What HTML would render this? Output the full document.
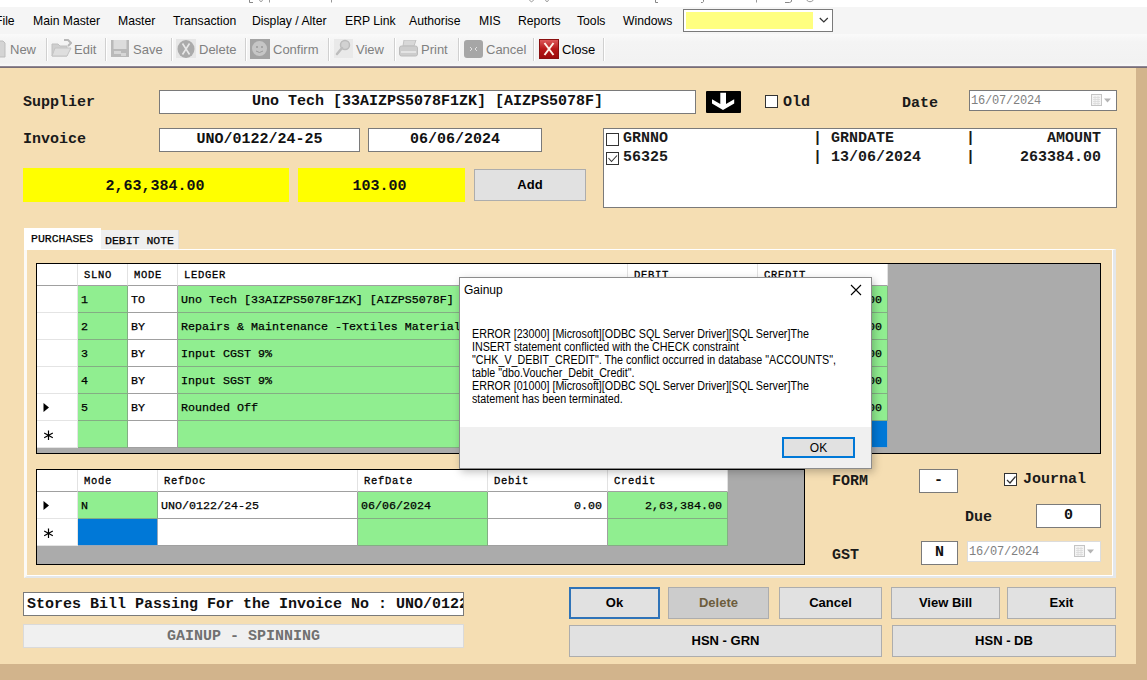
<!DOCTYPE html>
<html><head><meta charset="utf-8">
<style>
*{margin:0;padding:0;box-sizing:border-box}
html,body{width:1147px;height:680px;overflow:hidden;background:#d2b48c;position:relative}
body{font-family:"Liberation Sans",sans-serif}
.a{position:absolute}
.mono{font-family:"Liberation Mono",monospace;font-weight:bold}
#top{left:0;top:0;width:1147px;height:7px;background:#fff}
#menu{left:0;top:7px;width:1147px;height:27px;background:#f5f5f5}
.mi{position:absolute;top:7px;font-size:12.2px;color:#000;white-space:nowrap}
#combo{left:683px;top:9px;width:150px;height:23px;border:1px solid #7a7a7a;background:#fff}
#combo .y{position:absolute;left:2px;top:2px;width:127px;height:17px;background:#ffff80}
#tool{left:0;top:34px;width:1147px;height:32px;background:linear-gradient(#fafafa,#f4f4f4 25%,#f2f2f2 90%,#f9f9f9)}
#tline{left:0;top:66px;width:1147px;height:2px;background:linear-gradient(#9a92a2,#6c6268)}
.ti{position:absolute;top:8px;font-size:13px;color:#808080;white-space:nowrap}
.sep{position:absolute;top:4px;width:1px;height:23px;background:#d0d0d0;box-shadow:1px 0 0 #fff}
.ico{position:absolute;top:6px;width:20px;height:20px}
#form{left:0;top:68px;width:1136px;height:596px;background:#f5deb3}
.lbl{position:absolute;font-family:"Liberation Mono",monospace;font-weight:bold;font-size:15px;color:#1a1a1a;white-space:nowrap}
.box{position:absolute;background:#fff;border:1px solid #7a7a7a;font-family:"Liberation Mono",monospace;font-weight:bold;font-size:15px;color:#111;white-space:nowrap;overflow:hidden}
.btn{position:absolute;background:#e1e1e1;border:1px solid #adadad;font-family:"Liberation Sans",sans-serif;font-weight:bold;font-size:13px;color:#000;text-align:center}
.grid{position:absolute;background:#ababab;border:1px solid #000}
.c{position:absolute;border-right:1px solid #a0a0a0;border-bottom:1px solid #a0a0a0;font-family:"Liberation Mono",monospace;font-size:13px;color:#000;white-space:nowrap;overflow:hidden}
.g{background:#90ee90}
.w{background:#fff}
.hd{background:#fff;font-size:11px}
.t{position:absolute;white-space:nowrap}
.c .t{font-weight:normal;font-size:11.67px;-webkit-text-stroke:0.25px #000}
.hd .t{font-size:10.5px;letter-spacing:0.7px;font-weight:normal;-webkit-text-stroke:0.3px #000}
.sel{background:#0078d7}
</style></head><body>
<div id="top" class="a"></div>
<svg class="a" style="left:0;top:0" width="1147" height="7"><path d="M249.5 0 V2.5 H253" stroke="#888" stroke-width="1" fill="none"/><path d="M259.5 0 Q261.0 3.5 262.5 0" stroke="#999" stroke-width="1" fill="none"/><path d="M269.5 0 V2.5" stroke="#999" stroke-width="1"/><path d="M331.5 0 V2.5" stroke="#999" stroke-width="1"/><path d="M529.5 0 Q531.5 3.5 533.5 0" stroke="#999" stroke-width="1" fill="none"/><path d="M545.5 0 Q547.0 3.5 548.5 0" stroke="#999" stroke-width="1" fill="none"/><path d="M655.5 0 V2.5 H658" stroke="#888" stroke-width="1" fill="none"/><path d="M703.5 0 V1.5 Q703 3 701 2.5" stroke="#888" stroke-width="1" fill="none"/><path d="M756.5 0 V2.5" stroke="#999" stroke-width="1"/><path d="M791.5 0 V1.5 Q791 3 785 2.5" stroke="#888" stroke-width="1" fill="none"/><path d="M806.5 0 Q810.0 3.5 813.5 0" stroke="#999" stroke-width="1" fill="none"/></svg>
<div id="menu" class="a">
  <span class="mi" style="left:-5px">File</span>
  <span class="mi" style="left:33px">Main Master</span>
  <span class="mi" style="left:118px">Master</span>
  <span class="mi" style="left:173px">Transaction</span>
  <span class="mi" style="left:252px">Display / Alter</span>
  <span class="mi" style="left:345px">ERP Link</span>
  <span class="mi" style="left:409px">Authorise</span>
  <span class="mi" style="left:479px">MIS</span>
  <span class="mi" style="left:518px">Reports</span>
  <span class="mi" style="left:577px">Tools</span>
  <span class="mi" style="left:623px">Windows</span>
</div>
<div id="combo" class="a"><div class="y"></div>
  <svg class="a" style="left:135px;top:7px" width="10" height="7"><path d="M0.8 1 L4.8 5 L8.8 1" stroke="#333" stroke-width="1.2" fill="none"/></svg>
</div>
<div id="tool" class="a">
  <span class="ti" style="left:10px">New</span>
  <div class="sep" style="left:46px"></div>
  <span class="ti" style="left:74px">Edit</span>
  <div class="sep" style="left:105px"></div>
  <span class="ti" style="left:133px">Save</span>
  <div class="sep" style="left:171px"></div>
  <span class="ti" style="left:199px">Delete</span>
  <div class="sep" style="left:245px"></div>
  <span class="ti" style="left:273px">Confirm</span>
  <div class="sep" style="left:328px"></div>
  <span class="ti" style="left:356px">View</span>
  <div class="sep" style="left:394px"></div>
  <span class="ti" style="left:421px">Print</span>
  <div class="sep" style="left:458px"></div>
  <span class="ti" style="left:486px">Cancel</span>
  <div class="sep" style="left:533px"></div>
  <span class="ti" style="left:562px;color:#000">Close</span>
  <div class="sep" style="left:603px"></div>
</div>

<svg class="a" style="left:0;top:39px" width="6" height="20"><path d="M-8 2 H3 L5 4 V18 H-8 Z" fill="#d4d4d4" stroke="#bdbdbd"/></svg>
<svg class="a" style="left:51px;top:39px" width="21" height="19"><path d="M1 5 H7 L9 7 H16 V17 H1 Z" fill="#cfcfcf" stroke="#c0c0c0"/><path d="M1 17 L4 9 H20 L16 17 Z" fill="#dedede" stroke="#c4c4c4"/><path d="M13 1 L17 1 L20 4 L17 7" fill="none" stroke="#b8b8b8" stroke-width="2"/></svg>
<svg class="a" style="left:111px;top:40px" width="18" height="18"><rect x="0" y="0" width="18" height="17" fill="#b9b9b9"/><rect x="2.5" y="0" width="13" height="9" fill="#dcdcdc"/><rect x="3" y="11" width="7" height="3" fill="#d6d6d6"/><rect x="10" y="13" width="5" height="3" fill="#d6d6d6"/></svg>
<svg class="a" style="left:176px;top:39px" width="20" height="20"><rect x="0" y="0" width="20" height="19" fill="#e6e6e6"/><ellipse cx="10" cy="10" rx="8.5" ry="9" fill="#ababab"/><path d="M6.5 4.5 L13.5 15.5 M13.5 4.5 L6.5 15.5" stroke="#e8e8e8" stroke-width="1.6"/></svg>
<svg class="a" style="left:250px;top:39px" width="20" height="20"><rect x="0" y="0" width="20" height="20" fill="#a3a3a3"/><circle cx="9.5" cy="9.5" r="7.5" fill="#c6c6c6"/><circle cx="7" cy="8" r="1" fill="#9a9a9a"/><circle cx="12" cy="8" r="1" fill="#9a9a9a"/><path d="M6 12 Q9.5 15 13 12" stroke="#9a9a9a" fill="none"/></svg>
<svg class="a" style="left:334px;top:39px" width="19" height="19"><rect x="0" y="0" width="19" height="19" fill="#e9e9e9"/><circle cx="11" cy="6" r="4.5" fill="#d2d2d2" stroke="#bcbcbc" stroke-width="1.5"/><path d="M8 9 L3 15" stroke="#bdbdbd" stroke-width="2.5" stroke-linecap="round"/></svg>
<svg class="a" style="left:399px;top:40px" width="19" height="18"><path d="M5 0 H17 L15 6 H4 Z" fill="#d8d8d8" stroke="#c2c2c2"/><rect x="0.5" y="6" width="18" height="10" rx="2" fill="#cdcdcd" stroke="#bcbcbc"/><rect x="2" y="11" width="15" height="2" fill="#e4e4e4"/></svg>
<svg class="a" style="left:464px;top:40px" width="19" height="18"><rect x="0" y="0" width="19" height="18" rx="3" fill="#a6a6a6"/><path d="M6 7 L8 9 L6 11 M13 7 L11 9 L13 11" stroke="#e0e0e0" fill="none"/></svg>
<svg class="a" style="left:539px;top:39px" width="20" height="20"><defs><linearGradient id="rg" x1="0" y1="0" x2="0" y2="1"><stop offset="0" stop-color="#e06060"/><stop offset="0.5" stop-color="#b81818"/><stop offset="1" stop-color="#9a0a0a"/></linearGradient></defs><rect x="0" y="0" width="20" height="20" fill="url(#rg)"/><rect x="0.5" y="0.5" width="19" height="19" fill="none" stroke="#8a1010"/><path d="M5.5 4 L14.5 16 M14.5 4 L5.5 16" stroke="#fff3e8" stroke-width="2"/></svg>
<div id="tline" class="a"></div>
<div id="form" class="a"></div>
<!-- header row -->
<span class="lbl" style="left:23px;top:94px">Supplier</span>
<div class="box" style="left:159px;top:90px;width:537px;height:24px;text-align:center;line-height:22px">Uno Tech [33AIZPS5078F1ZK] [AIZPS5078F]</div>
<div class="a" style="left:706px;top:91px;width:35px;height:22px;background:#000;border-radius:1px">
 <svg class="a" style="left:0;top:0" width="35" height="22"><path d="M14.3 1.8 H20 V13 L28.2 8.2 V12.5 L17 19 L6 12.5 V8.2 L14.3 13 Z" fill="#fff"/></svg>
</div>
<div class="a" style="left:765px;top:95px;width:13px;height:13px;border:1px solid #333;background:#fff"></div>
<span class="lbl" style="left:783px;top:94px">Old</span>
<span class="lbl" style="left:902px;top:95px">Date</span>
<div class="a" style="left:969px;top:90px;width:148px;height:21px;border:1px solid #7a7a7a;background:#fff"><svg class="a" style="left:120px;top:3px" width="22" height="13"><rect x="1.5" y="0.5" width="10" height="11" fill="#f4f4f4" stroke="#c4c4c4"/><path d="M3 3.5 H10 M3 5.5 H10 M3 7.5 H10 M3 9.5 H10 M5 2 V11 M8 2 V11" stroke="#dadada" stroke-width="0.8"/><path d="M14 4.5 H21 L17.5 8.5 Z" fill="#b4b4b4"/></svg></div>
<span class="a mono" style="left:971px;top:94px;font-size:12px;font-weight:normal;color:#808080;letter-spacing:-0.2px">16/07/2024</span>
<span class="lbl" style="left:23px;top:131px">Invoice</span>
<div class="box" style="left:159px;top:128px;width:201px;height:24px;text-align:center;line-height:22px">UNO/0122/24-25</div>
<div class="box" style="left:368px;top:128px;width:174px;height:24px;text-align:center;line-height:22px">06/06/2024</div>
<div class="box" style="left:23px;top:168px;width:266px;height:34px;background:#ff0;border:none;text-align:center;line-height:37px;padding-right:2px">2,63,384.00</div>
<div class="box" style="left:298px;top:168px;width:167px;height:34px;background:#ff0;border:none;text-align:center;line-height:38px;padding-right:4px">103.00</div>
<div class="btn" style="left:474px;top:169px;width:112px;height:32px;line-height:30px">Add</div>
<div class="a" style="left:603px;top:128px;width:514px;height:80px;border:1px solid #7a7a7a;background:#fff"></div>
<div class="a" style="left:606px;top:133px;width:13px;height:13px;border:1px solid #333;background:#fff"></div>
<div class="a" style="left:606px;top:152px;width:13px;height:13px;border:1px solid #333;background:#fff"><svg class="a" style="left:0;top:0" width="11" height="11"><path d="M1.5 5 L4.5 8.5 L10 2.5" stroke="#333" stroke-width="1.1" fill="none"/></svg></div>
<span class="lbl" style="left:623px;top:130px;font-size:15px">GRNNO</span>
<span class="lbl" style="left:623px;top:149px;font-size:15px">56325</span>
<span class="lbl" style="left:813px;top:130px;font-size:15px">| GRNDATE</span>
<span class="lbl" style="left:813px;top:149px;font-size:15px">| 13/06/2024</span>
<span class="lbl" style="left:966px;top:130px;font-size:15px">|</span>
<span class="lbl" style="left:966px;top:149px;font-size:15px">|</span>
<span class="lbl" style="left:1000px;top:130px;width:101px;text-align:right;font-size:15px">AMOUNT</span>
<span class="lbl" style="left:1000px;top:149px;width:101px;text-align:right;font-size:15px">263384.00</span>
<!-- tabs -->
<div class="a" style="left:24px;top:249px;width:1092px;height:329px;border-left:3px solid #fcfaf6;border-top:1px solid #fff;border-right:3px solid #e4e7ea;border-bottom:2px solid #e4e7ea;box-shadow:inset -1px -1px 0 #fff"></div>
<div class="a" style="left:24px;top:228px;width:77px;height:22px;background:#fff"></div>
<span class="a mono" style="left:31px;top:232px;font-size:11.5px;font-weight:normal;color:#000;-webkit-text-stroke:0.25px #000">PURCHASES</span>
<div class="a" style="left:101px;top:230px;width:78px;height:19px;background:#efefef;border-right:1px solid #e0e0e0"></div>
<span class="a mono" style="left:105px;top:234px;font-size:11.5px;font-weight:normal;color:#000;-webkit-text-stroke:0.25px #000">DEBIT NOTE</span>
<!-- grid1 -->
<!--G1-->
<div class="grid" style="left:36px;top:263px;width:1065px;height:191px"></div>
<div class="c hd" style="left:37px;top:264px;width:41px;height:22px;border-right-color:#e2e2e2;border-bottom-color:#a0a0a0"></div>
<div class="c hd" style="left:78px;top:264px;width:50px;height:22px;border-right-color:#e2e2e2;border-bottom-color:#a0a0a0"><span class="t" style="left:6px;top:5px">SLNO</span></div>
<div class="c hd" style="left:128px;top:264px;width:50px;height:22px;border-right-color:#e2e2e2;border-bottom-color:#a0a0a0"><span class="t" style="left:6px;top:5px">MODE</span></div>
<div class="c hd" style="left:178px;top:264px;width:450px;height:22px;border-right-color:#e2e2e2;border-bottom-color:#a0a0a0"><span class="t" style="left:6px;top:5px">LEDGER</span></div>
<div class="c hd" style="left:628px;top:264px;width:130px;height:22px;border-right-color:#e2e2e2;border-bottom-color:#a0a0a0"><span class="t" style="left:6px;top:5px">DEBIT</span></div>
<div class="c hd" style="left:758px;top:264px;width:130px;height:22px;border-right-color:#e2e2e2;border-bottom-color:#a0a0a0"><span class="t" style="left:6px;top:5px">CREDIT</span></div>
<div class="c w" style="left:37px;top:286px;width:41px;height:27px;border-color:#e4e4e4"></div>
<div class="c g" style="left:78px;top:286px;width:50px;height:27px;border-color:#84ad84"><span class="t" style="left:3px;top:7px">1</span></div>
<div class="c w" style="left:128px;top:286px;width:50px;height:27px;border-color:#a0a0a0"><span class="t" style="left:3px;top:7px">TO</span></div>
<div class="c g" style="left:178px;top:286px;width:450px;height:27px;border-color:#84ad84"><span class="t" style="left:3px;top:7px">Uno Tech [33AIZPS5078F1ZK] [AIZPS5078F]</span></div>
<div class="c w" style="left:628px;top:286px;width:130px;height:27px;border-color:#a0a0a0"></div>
<div class="c g" style="left:758px;top:286px;width:130px;height:27px;border-color:#84ad84"><span class="t" style="right:5px;top:7px">263384.00</span></div>
<div class="c w" style="left:37px;top:313px;width:41px;height:27px;border-color:#e4e4e4"></div>
<div class="c g" style="left:78px;top:313px;width:50px;height:27px;border-color:#84ad84"><span class="t" style="left:3px;top:7px">2</span></div>
<div class="c w" style="left:128px;top:313px;width:50px;height:27px;border-color:#a0a0a0"><span class="t" style="left:3px;top:7px">BY</span></div>
<div class="c g" style="left:178px;top:313px;width:450px;height:27px;border-color:#84ad84"><span class="t" style="left:3px;top:7px">Repairs &amp; Maintenance -Textiles Materials</span></div>
<div class="c w" style="left:628px;top:313px;width:130px;height:27px;border-color:#a0a0a0"></div>
<div class="c g" style="left:758px;top:313px;width:130px;height:27px;border-color:#84ad84"><span class="t" style="right:5px;top:7px">223206.00</span></div>
<div class="c w" style="left:37px;top:340px;width:41px;height:27px;border-color:#e4e4e4"></div>
<div class="c g" style="left:78px;top:340px;width:50px;height:27px;border-color:#84ad84"><span class="t" style="left:3px;top:7px">3</span></div>
<div class="c w" style="left:128px;top:340px;width:50px;height:27px;border-color:#a0a0a0"><span class="t" style="left:3px;top:7px">BY</span></div>
<div class="c g" style="left:178px;top:340px;width:450px;height:27px;border-color:#84ad84"><span class="t" style="left:3px;top:7px">Input CGST 9%</span></div>
<div class="c w" style="left:628px;top:340px;width:130px;height:27px;border-color:#a0a0a0"></div>
<div class="c g" style="left:758px;top:340px;width:130px;height:27px;border-color:#84ad84"><span class="t" style="right:5px;top:7px">20088.00</span></div>
<div class="c w" style="left:37px;top:367px;width:41px;height:27px;border-color:#e4e4e4"></div>
<div class="c g" style="left:78px;top:367px;width:50px;height:27px;border-color:#84ad84"><span class="t" style="left:3px;top:7px">4</span></div>
<div class="c w" style="left:128px;top:367px;width:50px;height:27px;border-color:#a0a0a0"><span class="t" style="left:3px;top:7px">BY</span></div>
<div class="c g" style="left:178px;top:367px;width:450px;height:27px;border-color:#84ad84"><span class="t" style="left:3px;top:7px">Input SGST 9%</span></div>
<div class="c w" style="left:628px;top:367px;width:130px;height:27px;border-color:#a0a0a0"></div>
<div class="c g" style="left:758px;top:367px;width:130px;height:27px;border-color:#84ad84"><span class="t" style="right:5px;top:7px">20088.00</span></div>
<div class="c w" style="left:37px;top:394px;width:41px;height:27px;border-color:#e4e4e4"></div>
<div class="c g" style="left:78px;top:394px;width:50px;height:27px;border-color:#84ad84"><span class="t" style="left:3px;top:7px">5</span></div>
<div class="c w" style="left:128px;top:394px;width:50px;height:27px;border-color:#a0a0a0"><span class="t" style="left:3px;top:7px">BY</span></div>
<div class="c g" style="left:178px;top:394px;width:450px;height:27px;border-color:#84ad84"><span class="t" style="left:3px;top:7px">Rounded Off</span></div>
<div class="c w" style="left:628px;top:394px;width:130px;height:27px;border-color:#a0a0a0"></div>
<div class="c g" style="left:758px;top:394px;width:130px;height:27px;border-color:#84ad84"><span class="t" style="right:5px;top:7px">2.00</span></div>
<div class="c w" style="left:37px;top:421px;width:41px;height:27px;border-color:#e4e4e4"></div>
<div class="c g" style="left:78px;top:421px;width:50px;height:27px;border-color:#84ad84"></div>
<div class="c w" style="left:128px;top:421px;width:50px;height:27px;border-color:#a0a0a0"></div>
<div class="c g" style="left:178px;top:421px;width:450px;height:27px;border-color:#84ad84"></div>
<div class="c w" style="left:628px;top:421px;width:130px;height:27px;border-color:#a0a0a0"></div>
<div class="c sel" style="left:758px;top:421px;width:130px;height:27px;border-color:#9aa8b8"></div>
<svg class="a" style="left:43px;top:403px" width="7" height="10"><path d="M0.5 0 L6 4.5 L0.5 9 Z" fill="#000"/></svg>
<svg class="a" style="left:43px;top:430px" width="11" height="11"><path d="M5.5 0.5 V10 M1.2 3 L9.8 7.8 M1.2 7.8 L9.8 3" stroke="#000" stroke-width="1.2"/></svg>
<!--/G1-->

<!--G2-->
<div class="grid" style="left:36px;top:469px;width:769px;height:96px"></div>
<div class="c hd" style="left:37px;top:470px;width:41px;height:22px;border-right-color:#e2e2e2;border-bottom-color:#a0a0a0"></div>
<div class="c hd" style="left:78px;top:470px;width:80px;height:22px;border-right-color:#e2e2e2;border-bottom-color:#a0a0a0"><span class="t" style="left:6px;top:5px">Mode</span></div>
<div class="c hd" style="left:158px;top:470px;width:200px;height:22px;border-right-color:#e2e2e2;border-bottom-color:#a0a0a0"><span class="t" style="left:6px;top:5px">RefDoc</span></div>
<div class="c hd" style="left:358px;top:470px;width:130px;height:22px;border-right-color:#e2e2e2;border-bottom-color:#a0a0a0"><span class="t" style="left:6px;top:5px">RefDate</span></div>
<div class="c hd" style="left:488px;top:470px;width:120px;height:22px;border-right-color:#e2e2e2;border-bottom-color:#a0a0a0"><span class="t" style="left:6px;top:5px">Debit</span></div>
<div class="c hd" style="left:608px;top:470px;width:120px;height:22px;border-right-color:#e2e2e2;border-bottom-color:#a0a0a0"><span class="t" style="left:6px;top:5px">Credit</span></div>
<div class="c w" style="left:37px;top:492px;width:41px;height:27px;border-color:#e4e4e4"></div>
<div class="c g" style="left:78px;top:492px;width:80px;height:27px;border-color:#84ad84"><span class="t" style="left:3px;top:7px">N</span></div>
<div class="c w" style="left:158px;top:492px;width:200px;height:27px;border-color:#a0a0a0"><span class="t" style="left:3px;top:7px">UNO/0122/24-25</span></div>
<div class="c g" style="left:358px;top:492px;width:130px;height:27px;border-color:#84ad84"><span class="t" style="left:3px;top:7px">06/06/2024</span></div>
<div class="c w" style="left:488px;top:492px;width:120px;height:27px;border-color:#a0a0a0"><span class="t" style="right:5px;top:7px">0.00</span></div>
<div class="c g" style="left:608px;top:492px;width:120px;height:27px;border-color:#84ad84"><span class="t" style="right:5px;top:7px">2,63,384.00</span></div>
<div class="c w" style="left:37px;top:519px;width:41px;height:27px;border-color:#e4e4e4"></div>
<div class="c sel" style="left:78px;top:519px;width:80px;height:27px;border-color:#9aa8b8"></div>
<div class="c w" style="left:158px;top:519px;width:200px;height:27px;border-color:#a0a0a0"></div>
<div class="c g" style="left:358px;top:519px;width:130px;height:27px;border-color:#84ad84"></div>
<div class="c w" style="left:488px;top:519px;width:120px;height:27px;border-color:#a0a0a0"></div>
<div class="c g" style="left:608px;top:519px;width:120px;height:27px;border-color:#84ad84"></div>
<svg class="a" style="left:43px;top:501px" width="7" height="10"><path d="M0.5 0 L6 4.5 L0.5 9 Z" fill="#000"/></svg>
<svg class="a" style="left:43px;top:528px" width="11" height="11"><path d="M5.5 0.5 V10 M1.2 3 L9.8 7.8 M1.2 7.8 L9.8 3" stroke="#000" stroke-width="1.2"/></svg>
<!--/G2-->
<span class="lbl" style="left:832px;top:473px">FORM</span>
<div class="box" style="left:919px;top:469px;width:39px;height:24px;text-align:center;line-height:22px">-</div>
<div class="a" style="left:1004px;top:473px;width:13px;height:13px;border:1px solid #333;background:#fff"><svg class="a" style="left:1px;top:1px" width="10" height="10"><path d="M1 5 L4 8 L9.5 1.5" stroke="#333" stroke-width="1.2" fill="none"/></svg></div>
<span class="lbl" style="left:1023px;top:471px">Journal</span>
<span class="lbl" style="left:965px;top:509px">Due</span>
<div class="box" style="left:1036px;top:504px;width:65px;height:24px;text-align:center;line-height:22px">0</div>
<span class="lbl" style="left:832px;top:547px">GST</span>
<div class="box" style="left:921px;top:541px;width:37px;height:24px;text-align:center;line-height:22px">N</div>
<div class="a" style="left:967px;top:541px;width:134px;height:21px;border:1px solid #dcdcdc;background:#fff"><svg class="a" style="left:105px;top:3px" width="22" height="13"><rect x="1.5" y="0.5" width="10" height="11" fill="#f4f4f4" stroke="#c4c4c4"/><path d="M3 3.5 H10 M3 5.5 H10 M3 7.5 H10 M3 9.5 H10 M5 2 V11 M8 2 V11" stroke="#dadada" stroke-width="0.8"/><path d="M14 4.5 H21 L17.5 8.5 Z" fill="#b4b4b4"/></svg></div>
<span class="a mono" style="left:969px;top:545px;font-size:12px;font-weight:normal;color:#808080;letter-spacing:-0.2px">16/07/2024</span>
<div class="box" style="left:23px;top:592px;width:441px;height:24px;line-height:24px;padding-left:3px">Stores Bill Passing For the Invoice No : UNO/0122/24-25</div>
<div class="a mono" style="left:23px;top:624px;width:441px;height:24px;line-height:24px;border:1px solid #dadada;background:#f0f0f0;color:#707070;text-align:center;font-size:15px;font-weight:bold">GAINUP - SPINNING</div>
<div class="btn" style="left:569px;top:587px;width:91px;height:32px;line-height:30px;border:2px solid #2f73b8;line-height:28px">Ok</div>
<div class="btn" style="left:668px;top:587px;width:101px;height:32px;line-height:30px;background:#cccccc;color:#6d5d3d">Delete</div>
<div class="btn" style="left:779px;top:587px;width:103px;height:32px;line-height:30px;">Cancel</div>
<div class="btn" style="left:891px;top:587px;width:109px;height:32px;line-height:30px;">View Bill</div>
<div class="btn" style="left:1007px;top:587px;width:109px;height:32px;line-height:30px;">Exit</div>
<div class="btn" style="left:569px;top:625px;width:313px;height:32px;line-height:30px;">HSN - GRN</div>
<div class="btn" style="left:892px;top:625px;width:224px;height:32px;line-height:30px;">HSN - DB</div>
<div class="a" id="dlg" style="left:459px;top:277px;width:413px;height:192px;background:#fff;border:1px solid #8c8c8c;box-shadow:2px 3px 8px rgba(0,0,0,0.25)">
 <span class="a" style="left:4px;top:5px;font-size:12px;color:#000">Gainup</span>
 <svg class="a" style="left:390px;top:6px" width="12" height="12"><path d="M1 1 L11 11 M11 1 L1 11" stroke="#000" stroke-width="1.1"/></svg>
 <div class="a" style="left:12px;top:49.5px;width:450px;font-size:12px;line-height:13px;color:#000;white-space:nowrap;transform:scaleX(0.893);transform-origin:0 0">ERROR [23000] [Microsoft][ODBC SQL Server Driver][SQL Server]The<br>INSERT statement conflicted with the CHECK constraint<br>"CHK_V_DEBIT_CREDIT". The conflict occurred in database "ACCOUNTS",<br>table "dbo.Voucher_Debit_Credit".<br>ERROR [01000] [Microsoft][ODBC SQL Server Driver][SQL Server]The<br>statement has been terminated.</div>
 <div class="a" style="left:0;top:149px;width:411px;height:41px;background:#f0f0f0"></div>
 <div class="a" style="left:322px;top:159px;width:73px;height:21px;background:#e1e1e1;border:2px solid #0078d7;font-size:12px;text-align:center;line-height:19px">OK</div>
</div>
</body></html>
